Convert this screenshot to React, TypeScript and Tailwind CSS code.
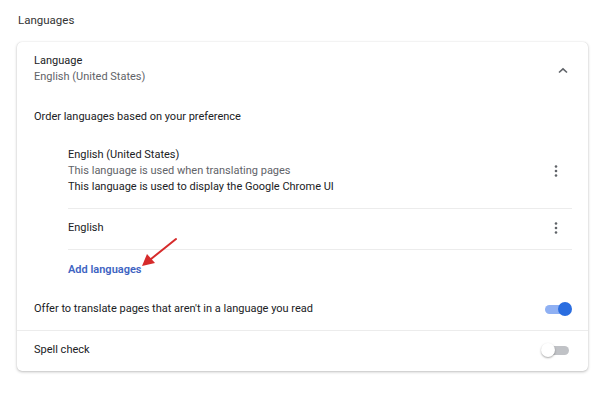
import { ReactNode } from "react";

const Dots = () => (
  <svg width="4" height="14" viewBox="0 0 4 14" className="shrink-0">
    <circle cx="2" cy="2.5" r="1.3" fill="#5f6368" />
    <circle cx="2" cy="7" r="1.3" fill="#5f6368" />
    <circle cx="2" cy="11.5" r="1.3" fill="#5f6368" />
  </svg>
);

const Toggle = ({ on }: { on: boolean }) =>
  on ? (
    <div className="relative w-[27px] h-[14px] flex items-center">
      <div className="w-[24px] h-[9px] rounded-full bg-[#8fb0f3]" />
      <div className="absolute right-0 top-0 w-[14px] h-[14px] rounded-full bg-[#2a6de0]" />
    </div>
  ) : (
    <div className="relative w-[28px] h-[14px] flex items-center justify-end">
      <div className="w-[24px] h-[9px] rounded-full bg-[#c0c2c6]" />
      <div className="absolute left-0 top-0 w-[14px] h-[14px] rounded-full bg-white shadow-[0_1px_2px_rgba(0,0,0,0.35)]" />
    </div>
  );

const Row = ({ children, border }: { children: ReactNode; border?: boolean }) => (
  <div className={`flex items-center justify-between pl-[17px] pr-[16px] pt-[11px] pb-[13px] ${border ? "border-t border-[#ececec]" : ""}`}>
    {children}
  </div>
);

export default function App() {
  return (
    <div
      className="w-[600px] h-[397px] bg-white text-[#202124] text-[11px] leading-[16px] overflow-hidden"
      style={{ fontFamily: "Roboto, 'Liberation Sans', sans-serif" }}
    >
      <div className="pl-[18px] pt-[12px] text-[11.5px] text-[#333]">Languages</div>

      <div className="relative ml-[17px] mt-[14px] w-[571px] rounded-[5px] bg-white shadow-[0_1px_3px_rgba(0,0,0,0.25),0_0_1px_rgba(0,0,0,0.15)]">
        <div className="flex items-center justify-between pl-[17px] pr-[20px] pt-[11px]">
          <div>
            <div>Language</div>
            <div className="text-[#5f6368]">English (United States)</div>
          </div>
          <svg width="10" height="7" viewBox="0 0 10 7" className="mt-[2px]">
            <path d="M1 5.5 L5 1.8 L9 5.5" stroke="#5f6368" strokeWidth="1.6" fill="none" />
          </svg>
        </div>

        <div className="pl-[17px] mt-[24px]">Order languages based on your preference</div>

        <div className="ml-[51px] mr-[16px] mt-[22px]">
          <div className="flex items-center justify-between pb-[13px] pr-[14px]">
            <div>
              <div>English (United States)</div>
              <div className="text-[#5f6368]">This language is used when translating pages</div>
              <div>This language is used to display the Google Chrome UI</div>
            </div>
            <Dots />
          </div>
          <div className="flex items-center justify-between border-t border-[#ececec] pt-[11px] pb-[13px] pr-[14px]">
            <div>English</div>
            <Dots />
          </div>
          <div className="border-t border-[#ececec] pt-[12px]">
            <span className="font-semibold text-[#3d63c2]">Add languages</span>
          </div>
        </div>

        <div className="mt-[12px]">
          <Row>
            <div>Offer to translate pages that aren't in a language you read</div>
            <Toggle on />
          </Row>
          <Row border>
            <div>Spell check</div>
            <div className="mr-[3px]">
              <Toggle on={false} />
            </div>
          </Row>
        </div>

        <svg className="absolute left-[120px] top-[192px]" width="50" height="40" viewBox="0 0 50 40">
          <path d="M39 5 L14 25" stroke="#d62b2b" strokeWidth="2" strokeLinecap="round" />
          <path d="M5 32 L10 20 L18 29 Z" fill="#d62b2b" />
        </svg>
      </div>
    </div>
  );
}
